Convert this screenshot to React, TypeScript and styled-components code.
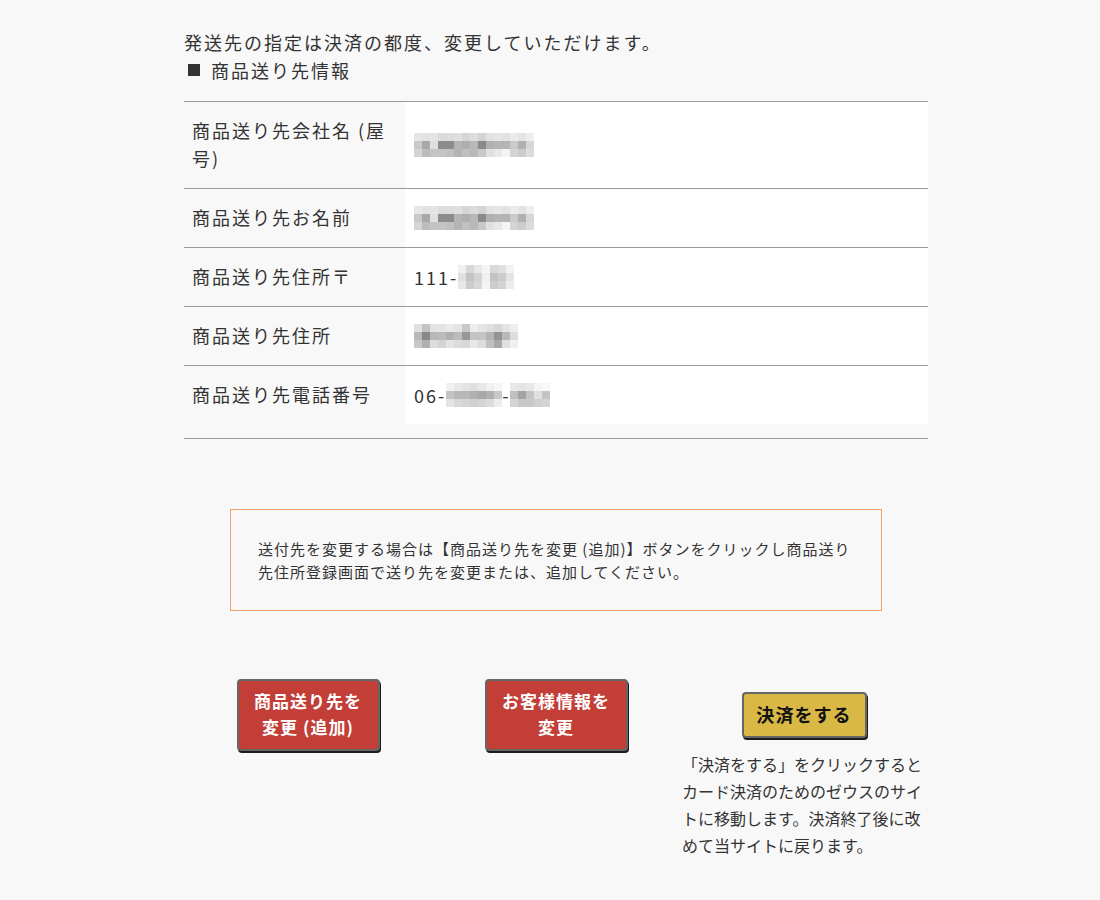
import React from "react";
import styled, { createGlobalStyle } from "styled-components";

const GlobalStyle = createGlobalStyle`
  html, body {
    margin: 0;
    padding: 0;
    background: #f8f8f8;
  }
  body {
    font-family: "Noto Sans CJK JP", "Noto Sans", sans-serif;
    color: #333;
  }
`;

const Page = styled.div`
  width: 744px;
  margin: 0 auto;
  padding: 28px 0 40px 12px;
  font-size: 18px;
  line-height: 28px;
  letter-spacing: 2px;
`;

const Intro = styled.p`
  margin: 0;
`;

const SectionHead = styled.h3`
  margin: 0 0 17px;
  font-size: 18px;
  font-weight: normal;
  display: flex;
  align-items: center;

  &::before {
    content: "";
    width: 12px;
    height: 12px;
    background: #333;
    margin: 0 11px 0 4px;
  }
`;

const TableWrap = styled.div`
  border-top: 1px solid #999;
  border-bottom: 1px solid #999;
  padding-bottom: 14px;
`;

const Row = styled.div<{ $first?: boolean }>`
  display: grid;
  grid-template-columns: 222px 1fr;
  border-top: ${({ $first }) => ($first ? "none" : "1px solid #999")};
`;

const Label = styled.div`
  padding: 14px 8px 16px;
`;

const Value = styled.div`
  padding: 15px 8px;
  background: #fff;
  display: flex;
  align-items: center;
`;

const MosaicGrid = styled.span<{ $cols: number }>`
  display: inline-grid;
  grid-template-columns: repeat(${({ $cols }) => $cols}, 8px);
  grid-auto-rows: 8px;
  vertical-align: middle;
`;

const Cell = styled.span`
  display: block;
`;

const Notice = styled.div`
  margin: 70px 46px 0;
  border: 1px solid #ee9d6b;
  padding: 27px 27px 26px;
  font-size: 15px;
  line-height: 1.55;
  letter-spacing: 1px;
`;

const Actions = styled.div`
  margin-top: 68px;
  display: grid;
  grid-template-columns: repeat(3, 1fr);
`;

const Column = styled.div`
  display: flex;
  flex-direction: column;
  align-items: center;
`;

const ButtonArea = styled.div`
  height: 72px;
  display: flex;
  align-items: center;
  justify-content: center;
`;

const ActionButton = styled.button<{ $variant: "red" | "gold" }>`
  font-family: "Noto Sans CJK JP", "Noto Sans", sans-serif;
  font-weight: bold;
  letter-spacing: 0.06em;
  border: 2px solid #666;
  border-radius: 4px;
  box-shadow: 1px 2px 0 #1d1d1d;
  cursor: pointer;
  background: ${({ $variant }) => ($variant === "red" ? "#c23e36" : "#d9b846")};
  color: ${({ $variant }) => ($variant === "red" ? "#fff" : "#111")};
  width: ${({ $variant }) => ($variant === "red" ? "143px" : "125px")};
  height: ${({ $variant }) => ($variant === "red" ? "72px" : "46px")};
  font-size: ${({ $variant }) => ($variant === "red" ? "17px" : "18px")};
  line-height: 26px;
  padding: 0 0 2px;
`;

const PayNote = styled.p`
  margin: 0;
  padding: 0 2px;
  width: 244px;
  font-size: 16px;
  line-height: 27px;
  letter-spacing: 0;
  text-align: left;
`;

const gray = (v: number) => `rgb(${v},${v},${v})`;

function Mosaic({ rows }: { rows: number[][] }) {
  return (
    <MosaicGrid $cols={rows[0].length}>
      {rows.flat().map((v, i) => (
        <Cell key={i} style={{ background: gray(v) }} />
      ))}
    </MosaicGrid>
  );
}

const companyMosaic = [
  [0xe6, 0xe2, 0xe4, 0xdc, 0xdc, 0xe0, 0xd6, 0xdc, 0xd4, 0xe2, 0xe6, 0xe2, 0xea, 0xe4, 0xee],
  [0xc8, 0xa8, 0xe0, 0x8c, 0x8c, 0xb4, 0xae, 0xb8, 0x8a, 0xb0, 0xb4, 0xb4, 0xca, 0xb0, 0xd6],
  [0xd4, 0xbc, 0xc4, 0xc4, 0xc0, 0xb4, 0xc0, 0xb8, 0xc8, 0xe0, 0xe8, 0xf4, 0xd4, 0xcc, 0xdc],
];

const zipMosaic = [
  [0xf0, 0xd8, 0xe8, 0xf4, 0xd8, 0xe0, 0xf2],
  [0xe0, 0xc4, 0xd4, 0xf0, 0xc4, 0xcc, 0xe4],
  [0xe8, 0xcc, 0xd8, 0xf4, 0xcc, 0xd4, 0xec],
];

const addressMosaic = [
  [0xe0, 0xc4, 0xe4, 0xe4, 0xea, 0xe4, 0xc8, 0xec, 0xe4, 0xe0, 0xd8, 0xe4, 0xee],
  [0xb8, 0x88, 0xb8, 0xbc, 0xb0, 0xbc, 0x98, 0xc4, 0xc4, 0xb4, 0x94, 0xb8, 0xdc],
  [0xc8, 0xb0, 0xdc, 0xd4, 0xe4, 0xdc, 0xd8, 0xe8, 0xdc, 0xc0, 0xa8, 0xe0, 0xf0],
];

const telMosaicA = [
  [0xf0, 0xe8, 0xe4, 0xe0, 0xe8, 0xf0, 0xf6],
  [0xc4, 0xb8, 0xb8, 0xb0, 0xa8, 0xb0, 0xc8],
  [0xe4, 0xd8, 0xd4, 0xd0, 0xd4, 0xdc, 0xec],
];

const telMosaicB = [
  [0xe8, 0xe4, 0xe8, 0xf4, 0xf8],
  [0xc0, 0xa4, 0xc4, 0xe0, 0xc4],
  [0xd4, 0xc8, 0xc8, 0xd0, 0xd4],
];

export default function App() {
  return (
    <>
      <GlobalStyle />
      <Page>
        <Intro>発送先の指定は決済の都度、変更していただけます。</Intro>
        <SectionHead>商品送り先情報</SectionHead>

        <TableWrap>
          <Row $first>
            <Label>商品送り先会社名 (屋号)</Label>
            <Value>
              <Mosaic rows={companyMosaic} />
            </Value>
          </Row>
          <Row>
            <Label>商品送り先お名前</Label>
            <Value>
              <Mosaic rows={companyMosaic} />
            </Value>
          </Row>
          <Row>
            <Label>商品送り先住所〒</Label>
            <Value>
              111-
              <Mosaic rows={zipMosaic} />
            </Value>
          </Row>
          <Row>
            <Label>商品送り先住所</Label>
            <Value>
              <Mosaic rows={addressMosaic} />
            </Value>
          </Row>
          <Row>
            <Label>商品送り先電話番号</Label>
            <Value>
              06-
              <Mosaic rows={telMosaicA} />
              -
              <Mosaic rows={telMosaicB} />
            </Value>
          </Row>
        </TableWrap>

        <Notice>
          送付先を変更する場合は【商品送り先を変更 (追加)】ボタンをクリックし商品送り先住所登録画面で送り先を変更または、追加してください。
        </Notice>

        <Actions>
          <Column>
            <ButtonArea>
              <ActionButton $variant="red">
                商品送り先を
                <br />
                変更 (追加)
              </ActionButton>
            </ButtonArea>
          </Column>
          <Column>
            <ButtonArea>
              <ActionButton $variant="red">
                お客様情報を
                <br />
                変更
              </ActionButton>
            </ButtonArea>
          </Column>
          <Column>
            <ButtonArea>
              <ActionButton $variant="gold">決済をする</ActionButton>
            </ButtonArea>
            <PayNote>
              「決済をする」をクリックするとカード決済のためのゼウスのサイトに移動します。決済終了後に改めて当サイトに戻ります。
            </PayNote>
          </Column>
        </Actions>
      </Page>
    </>
  );
}
